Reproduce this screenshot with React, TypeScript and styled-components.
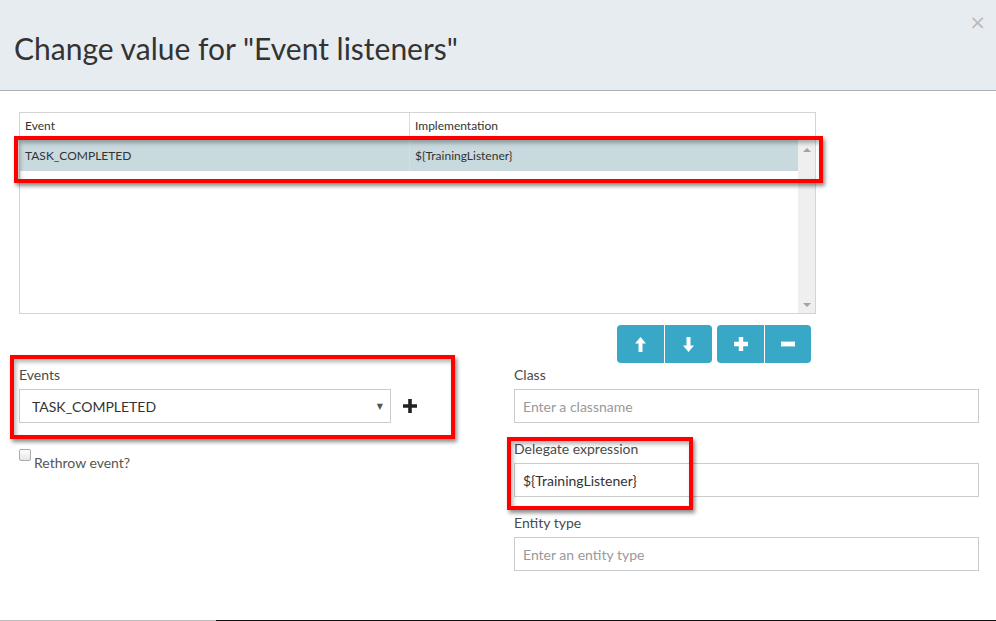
import React from "react";
import styled, { createGlobalStyle } from "styled-components";

const Global = createGlobalStyle`
  html, body { margin: 0; padding: 0; background: #fff; }
  body { font-family: Lato, "Open Sans", sans-serif; color: #333; width: 996px; height: 621px; overflow: hidden; }
  * { box-sizing: border-box; }
`;

const Page = styled.div`
  position: relative;
  width: 996px;
  height: 621px;
  display: flex;
  flex-direction: column;
`;

const Header = styled.div`
  height: 91px;
  background: #e7ecf0;
  border-bottom: 1px solid #a9b0b7;
  display: flex;
  align-items: center;
  padding: 6px 14px 0;
  position: relative;
  flex-shrink: 0;
`;

const Title = styled.h1`
  margin: 0;
  font-family: Lato, sans-serif;
  font-weight: 400;
  font-size: 30px;
  color: #333;
`;

const Close = styled.span`
  position: absolute;
  right: 10px;
  top: 12px;
  font-size: 20px;
  color: #bbb;
  font-family: "DejaVu Sans", sans-serif;
  line-height: 1;
`;

const Body = styled.div`
  flex: 1;
  padding: 21px 17px 0 19px;
  display: flex;
  flex-direction: column;
`;

const Grid = styled.div`
  width: 797px;
  height: 202px;
  border: 1px solid #d4d4d4;
  display: flex;
  flex-direction: column;
  font-size: 12px;
`;

const GridHead = styled.div`
  display: flex;
  height: 25px;
  border-bottom: 1px solid #dcdcdc;
  flex-shrink: 0;
`;

const Cell = styled.div<{ $w?: number; $sep?: boolean }>`
  width: ${(p) => (p.$w ? `${p.$w}px` : "auto")};
  flex: ${(p) => (p.$w ? "none" : 1)};
  padding-left: 5px;
  display: flex;
  align-items: center;
  border-right: ${(p) => (p.$sep ? "1px solid #dcdcdc" : "none")};
  color: #333;
`;

const GridBody = styled.div`
  flex: 1;
  display: flex;
`;

const Rows = styled.div`
  flex: 1;
  padding-top: 1px;
`;

const Row = styled.div`
  display: flex;
  height: 32px;
  background: #c8dade;
`;

const Scrollbar = styled.div`
  width: 17px;
  background: #efefef;
  display: flex;
  flex-direction: column;
  justify-content: space-between;
  align-items: center;
  padding: 10px 0 6px;
`;

const Arrow = styled.div<{ $down?: boolean }>`
  width: 0;
  height: 0;
  border-left: 4px solid transparent;
  border-right: 4px solid transparent;
  ${(p) => (p.$down ? "border-top: 4px solid #a3a3a3;" : "border-bottom: 4px solid #a3a3a3;")}
`;

const Toolbar = styled.div`
  display: flex;
  gap: 5px;
  margin: 11px 0 0 598px;
`;

const BtnGroup = styled.div`
  display: flex;
  border-radius: 4px;
  overflow: hidden;
`;

const Btn = styled.div<{ $w: number; $first?: boolean }>`
  width: ${(p) => p.$w}px;
  height: 38px;
  background: #38a8c6;
  display: flex;
  align-items: center;
  justify-content: center;
  border-left: ${(p) => (p.$first ? "none" : "1px solid #fff")};
`;

const Form = styled.div`
  display: flex;
  margin-top: 1px;
`;

const LeftCol = styled.div`
  width: 495px;
  display: flex;
  flex-direction: column;
`;

const RightCol = styled.div`
  width: 465px;
  display: flex;
  flex-direction: column;
`;

const Field = styled.div`
  display: flex;
  flex-direction: column;
  margin-bottom: 15px;
`;

const Label = styled.div`
  font-size: 14px;
  line-height: 20px;
  color: #4a4a4a;
  margin-bottom: 5px;
  padding-top: 1px;
  height: 21px;
`;

const Input = styled.div<{ $ph?: boolean }>`
  height: 34px;
  border: 1px solid #ccc;
  padding: 0 8px;
  display: flex;
  align-items: center;
  font-size: 14px;
  margin-top: -1px;
  color: ${(p) => (p.$ph ? "#999" : "#333")};
`;

const SelectRow = styled.div`
  display: flex;
  align-items: center;
  gap: 12px;
  margin-top: -1px;
`;

const Select = styled.div`
  width: 372px;
  height: 34px;
  border: 1px solid #ccc;
  padding: 0 7px 0 12px;
  display: flex;
  align-items: center;
  justify-content: space-between;
  font-size: 14px;
  color: #333;
`;

const Caret = styled.span`
  font-size: 8px;
  color: #555;
  font-family: "DejaVu Sans", sans-serif;
`;

const CheckRow = styled.div`
  display: flex;
  align-items: flex-start;
  gap: 3px;
  font-size: 14px;
  color: #555;
  margin-top: 11px;
`;

const Checkbox = styled.span`
  width: 12px;
  height: 12px;
  border: 1px solid #aaa;
  border-radius: 2px;
  background: linear-gradient(#fdfdfd, #e6e6e6);
`;

const CheckText = styled.span`
  margin-top: 5px;
`;

const Annot = styled.div<{ $x: number; $y: number; $w: number; $h: number }>`
  position: absolute;
  left: ${(p) => p.$x}px;
  top: ${(p) => p.$y}px;
  width: ${(p) => p.$w}px;
  height: ${(p) => p.$h}px;
  border: 4px solid #f00;
  box-shadow: 2px 3px 4px rgba(0, 0, 0, 0.45), inset 2px 3px 4px rgba(0, 0, 0, 0.3);
  pointer-events: none;
`;

const BottomEdge = styled.div`
  position: absolute;
  left: 0;
  right: 0;
  bottom: 0;
  height: 1px;
  background: linear-gradient(to right, #bbb 0, #bbb 216px, #111 216px, #111 100%);
`;

const Icon = ({ kind }: { kind: "up" | "down" | "plus" | "minus" }) => {
  const white = "#fff";
  if (kind === "up")
    return (
      <svg width="11" height="15" viewBox="0 0 11 15">
        <path d="M5.5 0 L11 6.5 L7.5 6.5 L7.5 15 L3.5 15 L3.5 6.5 L0 6.5 Z" fill={white} />
      </svg>
    );
  if (kind === "down")
    return (
      <svg width="11" height="15" viewBox="0 0 11 15">
        <path d="M5.5 15 L11 8.5 L7.5 8.5 L7.5 0 L3.5 0 L3.5 8.5 L0 8.5 Z" fill={white} />
      </svg>
    );
  if (kind === "plus")
    return (
      <svg width="14" height="14" viewBox="0 0 14 14">
        <path d="M4.8 0 H9.2 V4.8 H14 V9.2 H9.2 V14 H4.8 V9.2 H0 V4.8 H4.8 Z" fill={white} />
      </svg>
    );
  return (
    <svg width="14" height="14" viewBox="0 0 14 14">
      <rect x="0" y="4.6" width="14" height="4.8" fill={white} />
    </svg>
  );
};

const AddIcon = () => (
  <svg width="14" height="14" viewBox="0 0 14 14">
    <path d="M5.2 0 H8.8 V5.2 H14 V8.8 H8.8 V14 H5.2 V8.8 H0 V5.2 H5.2 Z" fill="#222" />
  </svg>
);

export default function App() {
  return (
    <>
      <Global />
      <Page>
        <Header>
          <Title>Change value for "Event listeners"</Title>
          <Close>×</Close>
        </Header>
        <Body>
          <Grid>
            <GridHead>
              <Cell $w={390} $sep>Event</Cell>
              <Cell>Implementation</Cell>
            </GridHead>
            <GridBody>
              <Rows>
                <Row>
                  <Cell $w={390} $sep>TASK_COMPLETED</Cell>
                  <Cell>{"${TrainingListener}"}</Cell>
                </Row>
              </Rows>
              <Scrollbar>
                <Arrow />
                <Arrow $down />
              </Scrollbar>
            </GridBody>
          </Grid>
          <Toolbar>
            <BtnGroup>
              <Btn $w={47} $first><Icon kind="up" /></Btn>
              <Btn $w={48}><Icon kind="down" /></Btn>
            </BtnGroup>
            <BtnGroup>
              <Btn $w={47} $first><Icon kind="plus" /></Btn>
              <Btn $w={47}><Icon kind="minus" /></Btn>
            </BtnGroup>
          </Toolbar>
          <Form>
            <LeftCol>
              <Field>
                <Label>Events</Label>
                <SelectRow>
                  <Select>
                    <span>TASK_COMPLETED</span>
                    <Caret>▼</Caret>
                  </Select>
                  <AddIcon />
                </SelectRow>
              </Field>
              <CheckRow>
                <Checkbox />
                <CheckText>Rethrow event?</CheckText>
              </CheckRow>
            </LeftCol>
            <RightCol>
              <Field>
                <Label>Class</Label>
                <Input $ph>Enter a classname</Input>
              </Field>
              <Field>
                <Label>Delegate expression</Label>
                <Input>{"${TrainingListener}"}</Input>
              </Field>
              <Field>
                <Label>Entity type</Label>
                <Input $ph>Enter an entity type</Input>
              </Field>
            </RightCol>
          </Form>
        </Body>
        <Annot $x={14} $y={136} $w={809} $h={47} />
        <Annot $x={10} $y={355} $w={445} $h={84} />
        <Annot $x={507} $y={437} $w={186} $h={73} />
        <BottomEdge />
      </Page>
    </>
  );
}
